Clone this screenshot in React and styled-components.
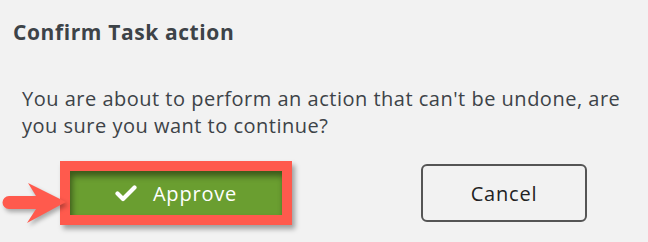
import styled, { createGlobalStyle } from "styled-components";

const GlobalStyle = createGlobalStyle`
  html, body {
    margin: 0;
    padding: 0;
    background: #f2f2f2;
  }
  body {
    font-family: "Open Sans", Lato, "Liberation Sans", sans-serif;
    color: #3d4348;
  }
`;

const Page = styled.div`
  width: 648px;
  height: 242px;
  background: #f2f2f2;
  overflow: hidden;
`;

const Title = styled.h2`
  margin: 0;
  padding: 19px 0 0 13px;
  font-size: 21px;
  line-height: 26px;
  font-weight: 700;
  letter-spacing: 0.6px;
  color: #3d4348;
`;

const Message = styled.p`
  margin: 0;
  padding: 40px 0 0 22px;
  font-size: 20px;
  line-height: 27px;
  font-weight: 400;
  letter-spacing: 0.5px;
  color: #3d4348;
`;

const Actions = styled.div`
  display: flex;
  align-items: center;
  padding: 22px 0 0 60px;
`;

const Highlight = styled.div`
  position: relative;
  border: 10px solid #ff5a4d;
  box-shadow: 3px 4px 5px rgba(0, 0, 0, 0.35);
`;

const Pointer = styled.svg`
  position: absolute;
  left: -70px;
  top: 0px;
  overflow: visible;
  filter: drop-shadow(2px 3px 2px rgba(0, 0, 0, 0.3));
`;

const ApproveButton = styled.button`
  display: flex;
  align-items: center;
  justify-content: center;
  gap: 16px;
  width: 212px;
  height: 44px;
  padding: 0;
  border: none;
  background: #6a9e30;
  box-shadow: inset 2px 5px 6px rgba(0, 0, 0, 0.45);
  color: #ffffff;
  font-family: inherit;
  font-size: 20px;
  font-weight: 400;
  letter-spacing: 0.8px;
  cursor: pointer;
`;

const CancelButton = styled.button`
  margin-left: 129px;
  width: 166px;
  height: 58px;
  border: 2px solid #555555;
  border-radius: 6px;
  background: transparent;
  color: #222222;
  font-family: inherit;
  font-size: 20px;
  font-weight: 400;
  letter-spacing: 0.8px;
  cursor: pointer;
`;

const Check = () => (
  <svg width="22" height="17" viewBox="0 0 22 17" aria-hidden="true">
    <path
      d="M2.5 8.5 L8 14 L19.5 2.5"
      fill="none"
      stroke="#ffffff"
      strokeWidth="4.2"
      strokeLinecap="round"
      strokeLinejoin="round"
    />
  </svg>
);

export default function App() {
  return (
    <Page>
      <GlobalStyle />
      <Title>Confirm Task action</Title>
      <Message>
        You are about to perform an action that can't be undone, are
        <br />
        you sure you want to continue?
      </Message>
      <Actions>
        <Highlight>
          <Pointer width="70" height="64" viewBox="0 162 70 64">
            <path
              d="M9 187 H36 L28 174 L66 193 L27 214 L36 200 H9 A6.5 6.5 0 0 1 9 187 Z"
              fill="#ff5a4d"
            />
          </Pointer>
          <ApproveButton>
            <Check />
            Approve
          </ApproveButton>
        </Highlight>
        <CancelButton>Cancel</CancelButton>
      </Actions>
    </Page>
  );
}
